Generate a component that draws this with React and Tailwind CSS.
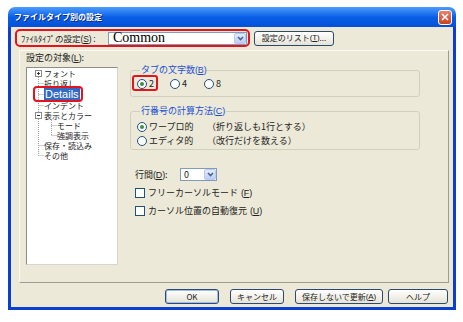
import React from 'react';

const jp = "font-['Noto_Sans_CJK_JP',sans-serif]";

function Key({ k }) {
  return (
    <span className="font-['Liberation_Sans',sans-serif] tracking-[-0.2px]">
      (<span className="underline">{k}</span>)
    </span>
  );
}

function Chevron() {
  return (
    <svg width="7" height="5" viewBox="0 0 7 5">
      <path d="M1 1l2.5 2.5L6 1" fill="none" stroke="#4d6185" strokeWidth="1.6" />
    </svg>
  );
}

function DropButton() {
  return (
    <span className="flex h-full w-[12px] items-center justify-center rounded-[2px] border border-[#b9c9ef] bg-gradient-to-b from-[#e3ecfd] to-[#b9cdf7]">
      <Chevron />
    </span>
  );
}

function Radio({ checked }) {
  return (
    <span className="flex h-[10px] w-[10px] shrink-0 items-center justify-center rounded-full border border-[#1c5180] bg-white">
      {checked && <span className="h-[4px] w-[4px] rounded-full bg-[#3f8f3f]" />}
    </span>
  );
}

function Check() {
  return <span className="h-[10px] w-[10px] shrink-0 border border-[#1c5180] bg-white" />;
}

function XpButton({ w, children }) {
  return (
    <button
      className={`flex h-[15px] items-center justify-center rounded-[3px] border border-[#2c4a6e] bg-gradient-to-b from-white to-[#e6e3d6] text-[8px] leading-[8px] text-[#222] ${w}`}
    >
      {children}
    </button>
  );
}

function TreeLines() {
  return (
    <svg className="pointer-events-none absolute left-0 top-0" width="92" height="100">
      <g stroke="#a0a0a0" strokeDasharray="1 1" fill="none">
        <path d="M11.5 9v78.5" />
        <path d="M11.5 15.5h5M11.5 26.5h5M11.5 37.5h5M11.5 77.5h5M11.5 87.5h5" />
        <path d="M24.5 52v15.5M24.5 57.5h5M24.5 67.5h5" />
      </g>
      <g fill="#fff" stroke="#8a8a8a">
        <rect x="8.5" y="2.5" width="6" height="6" />
        <rect x="8.5" y="44.5" width="6" height="6" />
      </g>
      <path d="M10 5.5h3M11.5 4v3M10 47.5h3" stroke="#333" />
    </svg>
  );
}

function TreeRow({ indent, h = 'h-[10px]', children }) {
  return (
    <div className={`flex items-center ${h} ${indent} text-[8px] leading-[9px] text-[#222]`}>{children}</div>
  );
}

export default function App() {
  return (
    <div className={`h-[322px] w-[463px] bg-white pl-[8px] pt-[7px] ${jp}`}>
      <div className="flex h-[303px] w-[448px] flex-col overflow-hidden rounded-t-[7px]">
        {/* title bar */}
        <div className="flex h-[20px] shrink-0 items-center justify-between bg-gradient-to-b from-[#4a9cff] via-[#0a5fe6] to-[#0450d8] pl-[6px] pr-[4px]">
          <span className="text-[8px] font-bold leading-[10px] text-white [text-shadow:1px_1px_0_#0a2a80]">
            ファイルタイプ別の設定
          </span>
          <span className="flex h-[15px] w-[14px] items-center justify-center rounded-[3px] border border-white bg-gradient-to-b from-[#e8826a] to-[#c9401f]">
            <svg width="8" height="8" viewBox="0 0 8 8">
              <path d="M1 1l6 6M7 1L1 7" stroke="#fff" strokeWidth="1.6" />
            </svg>
          </span>
        </div>

        {/* client */}
        <div className="flex flex-1 flex-col border-x-[3px] border-b-[3px] border-[#0a3fcf] bg-[#ece9d8]">
          <div className="ml-[4px] mt-[2px] flex items-center gap-[4px]">
            <div className="flex h-[18px] w-[235px] items-center justify-between rounded-[5px] border-2 border-[#e3141b] pl-[4px] pr-[1px]">
              <span className="text-[8.5px] leading-[10px] text-[#222]">
                ﾌｧｲﾙﾀｲﾌﾟの設定<Key k="S" /> :
              </span>
              <span className="flex h-[13px] w-[139px] items-center justify-between border border-[#7f9db9] bg-white pl-[4px]">
                <span className="font-['Liberation_Serif',serif] text-[14px] leading-[12px] text-black">Common</span>
                <DropButton />
              </span>
            </div>
            <XpButton w="w-[80px] h-[14px]">
              設定のリスト<Key k="T" />...
            </XpButton>
          </div>

          {/* main panel */}
          <div className="ml-[8px] mt-[3px] flex h-[233px] w-[430px] border border-b-[#9d9d92] border-l-[#faf9f3] border-r-[#9d9d92] border-t-[#faf9f3] pt-[1px]">
            <div className="flex flex-col pl-[6px]">
              <span className="h-[12px] text-[9px] leading-[12px] text-[#222]">
                設定の対象<Key k="L" />:
              </span>
              <div className="relative mt-[3px] h-[198px] w-[92px] border border-[#8d8d8d] border-r-[#d8d6cc] border-b-[#d8d6cc] bg-white">
                <TreeLines />
                <TreeRow indent="pl-[17px]">フォント</TreeRow>
                <TreeRow indent="pl-[17px]">折り返し</TreeRow>
                <TreeRow indent="pl-[17px]" h="h-[12px]">
                  <span className="bg-[#316ac5] px-[1px] font-['Liberation_Sans',sans-serif] text-[11px] leading-[12px] text-white">
                    Details
                  </span>
                </TreeRow>
                <TreeRow indent="pl-[17px]">インデント</TreeRow>
                <TreeRow indent="pl-[17px]">表示とカラー</TreeRow>
                <TreeRow indent="pl-[30px]">モード</TreeRow>
                <TreeRow indent="pl-[30px]">強調表示</TreeRow>
                <TreeRow indent="pl-[17px]">保存・読込み</TreeRow>
                <TreeRow indent="pl-[17px]">その他</TreeRow>
                <span className="absolute left-[6px] top-[18px] h-[16px] w-[50px] rounded-[4px] border-2 border-[#e3141b]" />
              </div>
            </div>

            <div className="ml-[12px] mt-[13px] flex w-[290px] flex-col">
              <fieldset className="rounded-[3px] border border-[#d0d0bf] pb-[6px] pl-[6px] pt-[3px]">
                <legend className="ml-[3px] px-[1px] text-[9px] leading-[10px] text-[#1a4fd0]">
                  タブの文字数<Key k="B" />
                </legend>
                <div className="flex h-[12px] items-center text-[9px] leading-[10px] text-[#222]">
                  <span className="relative flex items-center gap-[2px]">
                    <Radio checked />2
                    <span className="absolute left-[-5px] top-[-4px] h-[16px] w-[26px] rounded-[3px] border-2 border-[#e3141b]" />
                  </span>
                  <span className="ml-[16px] flex items-center gap-[2px]">
                    <Radio />4
                  </span>
                  <span className="ml-[17px] flex items-center gap-[2px]">
                    <Radio />8
                  </span>
                </div>
              </fieldset>

              <fieldset className="mt-[9px] rounded-[3px] border border-[#d0d0bf] pb-[1px] pl-[6px] pt-[4px]">
                <legend className="ml-[3px] px-[1px] text-[9px] leading-[10px] text-[#1a4fd0]">
                  行番号の計算方法<Key k="C" />
                </legend>
                <div className="flex h-[14px] items-center text-[9px] leading-[10px] text-[#222]">
                  <span className="flex w-[70px] items-center gap-[2px]">
                    <Radio checked />
                    ワープロ的
                  </span>
                  <span>（折り返しも1行とする）</span>
                </div>
                <div className="flex h-[14px] items-center text-[9px] leading-[10px] text-[#222]">
                  <span className="flex w-[70px] items-center gap-[2px]">
                    <Radio />
                    エディタ的
                  </span>
                  <span>（改行だけを数える）</span>
                </div>
              </fieldset>

              <div className="mt-[18px] flex items-center pl-[5px] text-[9px] leading-[10px] text-[#222]">
                <span className="w-[45px]">
                  行間<Key k="D" />:
                </span>
                <span className="flex h-[13px] w-[37px] items-center justify-between border border-[#7f9db9] bg-white pl-[3px]">
                  <span>0</span>
                  <DropButton />
                </span>
              </div>
              <div className="mt-[5px] flex h-[14px] items-center gap-[3px] pl-[5px] text-[9px] leading-[10px] text-[#222]">
                <Check />
                フリーカーソルモード<Key k="F" />
              </div>
              <div className="mt-[4px] flex h-[14px] items-center gap-[3px] pl-[5px] text-[9px] leading-[10px] text-[#222]">
                <Check />
                カーソル位置の自動復元<Key k="U" />
              </div>
            </div>
          </div>

          {/* bottom buttons */}
          <div className="mt-[6px] flex pl-[154px]">
            <XpButton w="w-[54px] shadow-[inset_0_0_0_1px_#9cbcf2]">OK</XpButton>
            <span className="w-[11px]" />
            <XpButton w="w-[54px]">キャンセル</XpButton>
            <span className="w-[11px]" />
            <XpButton w="w-[88px]">
              保存しないで更新<Key k="A" />
            </XpButton>
            <span className="w-[5px]" />
            <XpButton w="w-[60px]">ヘルプ</XpButton>
          </div>
        </div>
      </div>
    </div>
  );
}
